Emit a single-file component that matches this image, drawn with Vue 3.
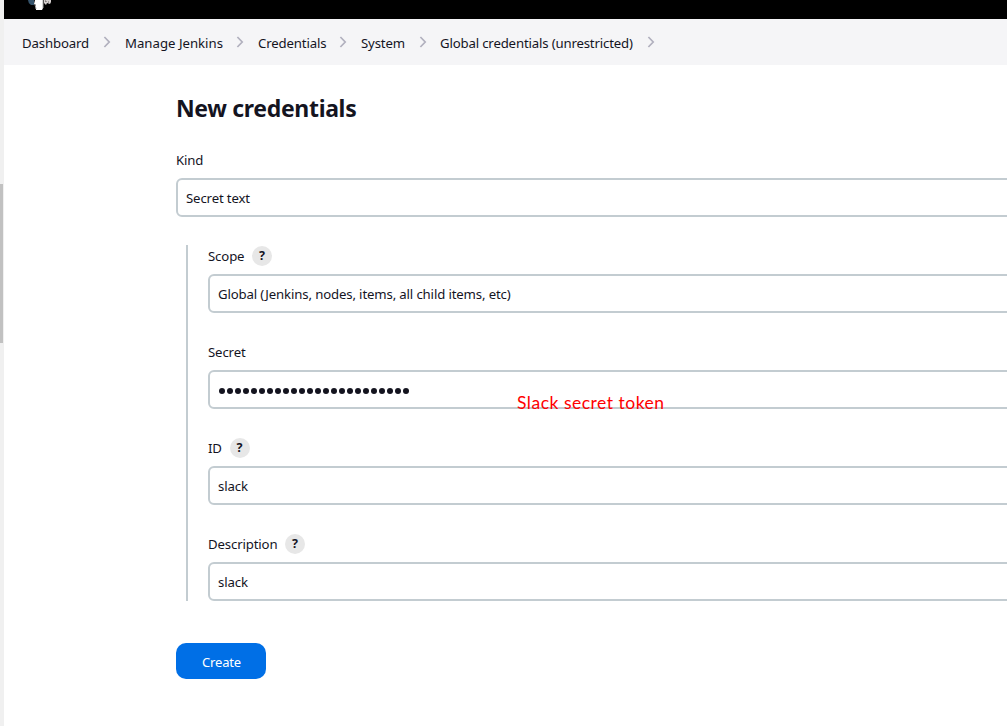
<script setup>
const crumbs = [
  { text: 'Dashboard', key: 'dashboard' },
  { text: 'Manage Jenkins', key: 'manage' },
  { text: 'Credentials', key: 'credentials' },
  { text: 'System', key: 'system' },
  { text: 'Global credentials (unrestricted)', key: 'global' },
]
const fields = [
  { label: 'Scope', key: 'scope', help: true, value: 'Global (Jenkins, nodes, items, all child items, etc)' },
  { label: 'Secret', key: 'secret', dots: 24, note: 'Slack secret token' },
  { label: 'ID', key: 'id', help: true, value: 'slack' },
  { label: 'Description', key: 'description', help: true, value: 'slack' },
]
</script>

<template>
  <div class="window">
    <div class="scroll"><div class="thumb"></div></div>
    <div class="page">
      <header class="topbar">
        <svg class="logo" width="26" height="12" viewBox="0 0 26 12">
          <path d="M3 0h6v5H6Q3 3 3 0z" fill="#34536b" />
          <path d="M10 0h8v8l-1 2h-6V5L9 4z" fill="#fff" />
          <path d="M10 4l1 5M18 0v8" stroke="#a8a8a8" fill="none" />
          <path d="M19 0h7v2l-1 2-3-1-1 2-2-2z" fill="#d5d0cf" />
          <path d="M20 1h1v1M23 2h1" stroke="#65605f" fill="none" />
        </svg>
      </header>
      <nav class="crumbs">
        <template v-for="c in crumbs" :key="c.key">
          <a class="crumb" :class="c.key">{{ c.text }}</a>
          <svg class="chev" width="8" height="12" viewBox="0 0 8 12">
            <path d="M1.4 1L6.2 6L1.4 11" fill="none" stroke="#b1b0be" stroke-width="1.7" />
          </svg>
        </template>
      </nav>
      <main class="form">
        <h1>New credentials</h1>
        <section class="field">
          <div class="label"><span>Kind</span></div>
          <div class="input"><span>Secret text</span></div>
        </section>
        <div class="group">
          <section v-for="f in fields" :key="f.key" class="field">
            <div class="label">
              <span>{{ f.label }}</span>
              <b v-if="f.help" class="help">?</b>
            </div>
            <div class="input">
              <span v-if="f.value">{{ f.value }}</span>
              <div v-else class="dots"><i v-for="n in f.dots" :key="n"></i></div>
              <span v-if="f.note" class="note">{{ f.note }}</span>
            </div>
          </section>
        </div>
        <button class="create">Create</button>
      </main>
    </div>
  </div>
</template>

<style>
body { background: #fff; overflow: hidden; }
</style>
<style scoped>
* { box-sizing: border-box; }
.window { display: flex; width: 1007px; height: 726px; overflow: hidden; font: 13.2px/20px "Noto Sans", "Open Sans", sans-serif; letter-spacing: -0.14px; color: #14141f; white-space: nowrap; }
.scroll { width: 4px; flex: none; background: #f0f0f0; padding-top: 184px; }
.thumb { width: 3px; height: 159px; background: #c1c1c1; }
.page { flex: 1; min-width: 0; background: #fff; }
.topbar { height: 19px; background: #000; padding-left: 21px; }
.logo { display: block; }
.crumbs { display: flex; align-items: center; height: 46px; background: #f5f5f7; padding: 2px 0 0 18px; }
.crumb { flex: none; }
.dashboard { width: 67px; }
.manage { width: 97px; letter-spacing: 0; }
.credentials { width: 67px; }
.system { width: 44px; }
.global { width: 193px; margin-left: -1px; letter-spacing: -0.16px; }
.chev { flex: none; margin: -3px 14px 0 14px; }
.form { padding-left: 172px; }
h1 { margin: 0; padding-top: 27px; font-size: 23px; line-height: 32px; letter-spacing: -0.33px; font-weight: 700; height: 85px; }
.field { height: 96px; }
.label { display: flex; align-items: center; height: 20px; gap: 8px; }
.help { width: 20px; height: 20px; border-radius: 50%; background: #e7e7e7; text-align: center; font-size: 12.5px; line-height: 20px; padding-right: 1px; }
.input { position: relative; display: flex; align-items: center; width: 900px; height: 39px; margin-top: 8px; padding-left: 8px; border: 2px solid #c3ccd1; border-radius: 6px; }
.group { height: 356px; border-left: 2px solid #c3ccd1; margin: -1px 0 0 10px; padding: 1px 0 0 20px; }
.dots { display: flex; gap: 2px; padding-left: 1px; margin-top: 2px; }
.dots i { width: 6px; height: 6px; border-radius: 50%; background: #14141f; }
.note { position: absolute; left: 307px; top: 19px; color: #f00; font: 400 17.5px/24px Lato, "Open Sans", sans-serif; letter-spacing: 0.5px; }
.create { display: block; width: 90px; height: 36px; margin-top: 42px; padding: 2px 0 0 1px; border: 0; border-radius: 10px; background: #006fe6; color: #fff; font: 13px/20px "Noto Sans", sans-serif; letter-spacing: -0.14px; }
</style>
